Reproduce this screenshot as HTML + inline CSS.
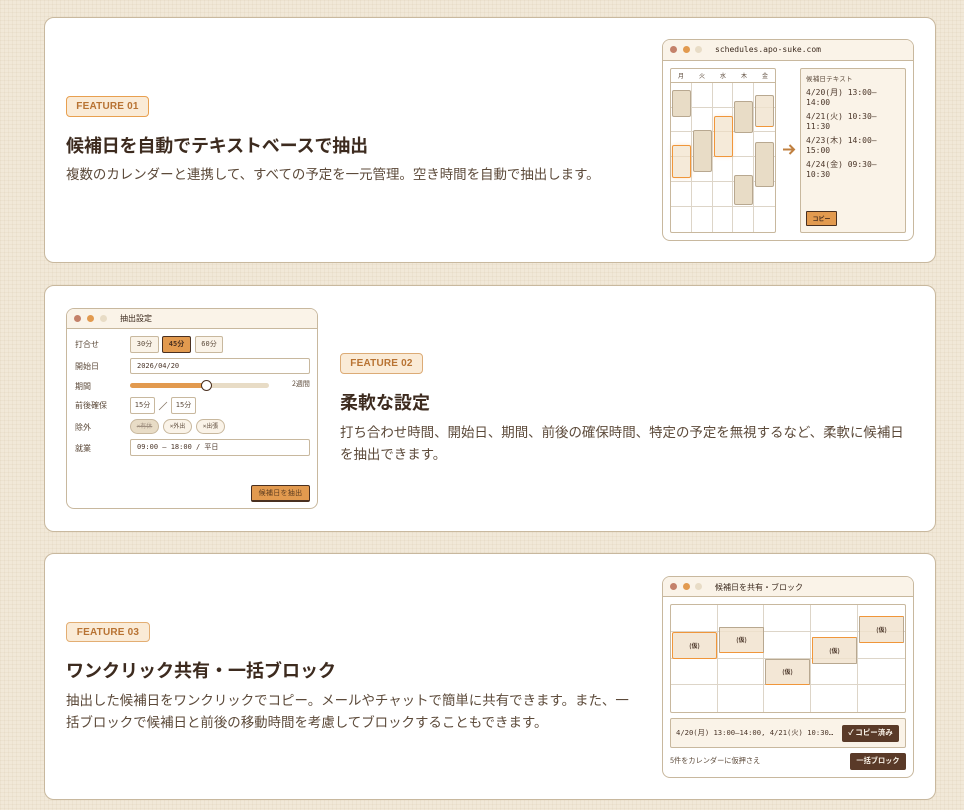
<!DOCTYPE html>
<html lang="ja"><head><meta charset="utf-8"><style>
*{box-sizing:border-box;margin:0;padding:0}
html,body{width:964px;height:810px;overflow:hidden}
body{position:relative;background-color:#f1e8d8;background-image:linear-gradient(rgba(190,165,120,.09) 1px,transparent 1px),linear-gradient(90deg,rgba(190,165,120,.09) 1px,transparent 1px);background-size:4px 4px;font-family:"Liberation Sans","Noto Sans CJK JP",sans-serif;color:#3d2b1f}
.card{position:absolute;left:44px;width:892px;background:#fff;border:1px solid #c8b89e;border-radius:10px}
.badge{position:absolute;height:21px;width:83px;background:#faebd7;border:1px solid #e8a050;border-radius:4px;color:#b87333;font:700 10px/19px "Liberation Sans",sans-serif;letter-spacing:.2px;text-align:center}
h2{position:absolute;font:700 18px/26px "Noto Sans CJK JP",sans-serif;color:#3d2b1f;white-space:nowrap}
p.d{position:absolute;font:400 13.45px/22px "Noto Sans CJK JP",sans-serif;color:#5c4a3a}
.win{position:absolute;width:252px;background:#fff;border:1px solid #c8b89e;border-radius:8px;overflow:hidden}
.bar{position:absolute;left:0;top:0;width:100%;height:21px;background:#faf3e8;border-bottom:1px solid #c8b89e}
.dot{position:absolute;width:7px;height:7px;border-radius:50%;top:6px}
.bt{position:absolute;top:4px;font:400 8px/12px "DejaVu Sans Mono","Noto Sans CJK JP",monospace;color:#3d2b1f;white-space:nowrap}
.t{position:absolute;white-space:nowrap;font:400 7px/10px "Noto Sans CJK JP",sans-serif;color:#5c4a3a}
.m{position:absolute;white-space:nowrap;font:400 7px/10px "DejaVu Sans Mono","Noto Sans CJK JP",monospace;color:#3d2b1f}
.b{position:absolute;background:#faf3e8;border:1px solid #c8b89e;border-radius:2px;text-align:center;font:400 7px/16px "DejaVu Sans Mono","Noto Sans CJK JP",monospace;color:#5c4a3a}
.l{position:absolute;background:#ddd5c8}
.e{position:absolute;background:#e8dcc6;border:1px solid #b8a890;border-radius:2px}
.h{position:absolute;background:rgba(240,222,196,.65);border:1px solid #f0963a;border-radius:2px}
.p{position:absolute;background:rgba(240,226,205,.82);border:1px solid #b8a890;border-bottom:1px solid #f0963a;border-radius:1px;text-align:center;font:700 6px/26px "Noto Sans CJK JP",sans-serif;color:#4a3528}
</style></head><body>

<div class="card" style="top:17px;height:246px"></div>
<div class="card" style="top:285px;height:247px"></div>
<div class="card" style="top:553px;height:247px"></div>

<div class="badge" style="left:66px;top:96px">FEATURE 01</div>
<h2 style="left:66px;top:132px;letter-spacing:-.15px">候補日を自動でテキストベースで抽出</h2>
<p class="d" style="left:66px;top:162px;width:574px">複数のカレンダーと連携して、すべての予定を一元管理。空き時間を自動で抽出します。</p>

<div class="win" style="left:662px;top:39px;height:202px">
  <div class="bar"></div>
  <div class="dot" style="left:7px;background:#c4816a"></div>
  <div class="dot" style="left:20px;background:#e29a4f"></div>
  <div class="dot" style="left:32px;background:#e8dcc6"></div>
  <div class="bt" style="left:52px">schedules.apo-suke.com</div>
</div>
<div style="position:absolute;left:670px;top:68px;width:106px;height:165px;border:1px solid #c8b89e;border-radius:2px;background:#fff"></div>
<div class="l" style="left:671px;top:82px;width:104px;height:1px;background:#c8b89e"></div>
<div class="l" style="left:691px;top:83px;width:1px;height:149px"></div>
<div class="l" style="left:712px;top:83px;width:1px;height:149px"></div>
<div class="l" style="left:732px;top:83px;width:1px;height:149px"></div>
<div class="l" style="left:753px;top:83px;width:1px;height:149px"></div>
<div class="l" style="left:671px;top:107px;width:104px;height:1px"></div>
<div class="l" style="left:671px;top:131px;width:104px;height:1px"></div>
<div class="l" style="left:671px;top:156px;width:104px;height:1px"></div>
<div class="l" style="left:671px;top:181px;width:104px;height:1px"></div>
<div class="l" style="left:671px;top:206px;width:104px;height:1px"></div>
<div class="t" style="left:678px;top:71px;font-size:6px">月</div>
<div class="t" style="left:699px;top:71px;font-size:6px">火</div>
<div class="t" style="left:720px;top:71px;font-size:6px">水</div>
<div class="t" style="left:741px;top:71px;font-size:6px">木</div>
<div class="t" style="left:762px;top:71px;font-size:6px">金</div>
<div class="e" style="left:672px;top:90px;width:19px;height:27px"></div>
<div class="h" style="left:672px;top:145px;width:19px;height:33px;box-shadow:0 0 4px rgba(240,150,58,.3)"></div>
<div class="e" style="left:693px;top:130px;width:19px;height:42px"></div>
<div class="h" style="left:714px;top:116px;width:19px;height:41px;box-shadow:0 0 4px rgba(240,150,58,.2)"></div>
<div class="e" style="left:734px;top:101px;width:19px;height:32px"></div>
<div class="e" style="left:734px;top:175px;width:19px;height:30px"></div>
<div class="e" style="left:755px;top:95px;width:19px;height:32px;background:rgba(240,226,205,.8);border-bottom-color:#f0963a"></div>
<div class="e" style="left:755px;top:142px;width:19px;height:45px"></div>
<svg style="position:absolute;left:781px;top:142px" width="15" height="15" viewBox="0 0 15 15"><path d="M2 7.5H13M8.5 3L13 7.5L8.5 12" fill="none" stroke="#c08040" stroke-width="2"/></svg>
<div style="position:absolute;left:800px;top:68px;width:106px;height:165px;background:#faf3e8;border:1px solid #c8b89e;border-radius:2px"></div>
<div class="t" style="left:806px;top:73px;font-size:6.5px;letter-spacing:.2px">候補日テキスト</div>
<div class="m" style="left:806px;top:88px;font-size:8px;line-height:10px;white-space:normal;width:90px;color:#4a3528">4/20(月) 13:00–<br>14:00</div>
<div class="m" style="left:806px;top:112px;font-size:8px;line-height:10px;white-space:normal;width:90px;color:#4a3528">4/21(火) 10:30–<br>11:30</div>
<div class="m" style="left:806px;top:136px;font-size:8px;line-height:10px;white-space:normal;width:90px;color:#4a3528">4/23(木) 14:00–<br>15:00</div>
<div class="m" style="left:806px;top:160px;font-size:8px;line-height:10px;white-space:normal;width:90px;color:#4a3528">4/24(金) 09:30–<br>10:30</div>
<div style="position:absolute;left:806px;top:211px;width:31px;height:15px;background:#e29a4f;border:1px solid #4a3020;border-radius:1px;text-align:center;font:700 6px/13px 'Noto Sans CJK JP',sans-serif;color:#4a3020">コピー</div>

<div class="badge" style="left:340px;top:353px;border-color:#dcab76">FEATURE 02</div>
<h2 style="left:340px;top:389px">柔軟な設定</h2>
<p class="d" style="left:340px;top:420px;width:574px">打ち合わせ時間、開始日、期間、前後の確保時間、特定の予定を無視するなど、柔軟に候補日を抽出できます。</p>

<div class="win" style="left:66px;top:308px;height:201px">
  <div class="bar" style="height:20px"></div>
  <div class="dot" style="left:7px;top:6px;background:#c4816a"></div>
  <div class="dot" style="left:20px;top:6px;background:#e29a4f"></div>
  <div class="dot" style="left:33px;top:6px;background:#e8dcc6"></div>
  <div class="t" style="left:53px;top:5px;font-size:8px;line-height:10px;color:#3d2b1f">抽出設定</div>
</div>
<div class="t" style="left:75px;top:340px;font-size:8px">打合せ</div>
<div class="t" style="left:75px;top:362px;font-size:8px">開始日</div>
<div class="t" style="left:75px;top:382px;font-size:8px">期間</div>
<div class="t" style="left:75px;top:401px;font-size:8px">前後確保</div>
<div class="t" style="left:75px;top:423px;font-size:8px">除外</div>
<div class="t" style="left:75px;top:444px;font-size:8px">就業</div>
<div class="b" style="left:130px;top:336px;width:29px;height:17px;line-height:15px">30分</div>
<div class="b" style="left:162px;top:336px;width:29px;height:17px;line-height:15px;background:#e29a4f;border-color:#4a3020;color:#4a3020;font-weight:700">45分</div>
<div class="b" style="left:195px;top:336px;width:28px;height:17px;line-height:15px">60分</div>
<div class="b" style="left:130px;top:358px;width:180px;height:16px;background:#fff;text-align:left;padding-left:6px;line-height:14px;color:#4a3528">2026/04/20</div>
<div style="position:absolute;left:130px;top:383px;width:139px;height:5px;background:#e8dcc6;border-radius:3px"></div>
<div style="position:absolute;left:130px;top:383px;width:76px;height:5px;background:#e29a4f;border-radius:3px 0 0 3px"></div>
<div style="position:absolute;left:201px;top:380px;width:11px;height:11px;background:#fff;border:1px solid #4a3020;border-radius:50%"></div>
<div class="t" style="left:292px;top:379px;font-size:7px">2週間</div>
<div class="b" style="left:130px;top:397px;width:25px;height:17px;background:#fff;line-height:14px">15分</div>
<svg style="position:absolute;left:158px;top:399px" width="10" height="12"><path d="M1 11L9 3" stroke="#8a7a68" stroke-width=".8"/></svg>
<div class="b" style="left:171px;top:397px;width:25px;height:17px;background:#fff;line-height:14px">15分</div>
<div class="b" style="left:130px;top:419px;width:29px;height:15px;border-radius:8px;background:#e8dcc6;font-size:6px;line-height:14px;color:#a09080;text-decoration:line-through">×有休</div>
<div class="b" style="left:163px;top:419px;width:29px;height:15px;border-radius:8px;font-size:6px;line-height:14px">×外出</div>
<div class="b" style="left:196px;top:419px;width:29px;height:15px;border-radius:8px;font-size:6px;line-height:14px">×出張</div>
<div class="b" style="left:130px;top:439px;width:180px;height:17px;background:#fff;text-align:left;padding-left:6px;line-height:14px;color:#4a3528">09:00 – 18:00 / 平日</div>
<div style="position:absolute;left:251px;top:485px;width:59px;height:17px;background:#e29a4f;border:1px solid #4a3020;border-bottom-width:2px;border-radius:2px;text-align:center;font:400 7px/14px 'Noto Sans CJK JP',sans-serif;letter-spacing:.3px;color:#5c3c20">候補日を抽出</div>

<div class="badge" style="left:66px;top:622px;height:20px;line-height:19px;border-color:#e3ae73;width:84px">FEATURE 03</div>
<h2 style="left:66px;top:657px">ワンクリック共有・一括ブロック</h2>
<p class="d" style="left:66px;top:688px;width:574px">抽出した候補日をワンクリックでコピー。メールやチャットで簡単に共有できます。また、一括ブロックで候補日と前後の移動時間を考慮してブロックすることもできます。</p>

<div class="win" style="left:662px;top:576px;height:202px">
  <div class="bar" style="height:20px"></div>
  <div class="dot" style="left:7px;top:6px;background:#c4816a"></div>
  <div class="dot" style="left:20px;top:6px;background:#e29a4f"></div>
  <div class="dot" style="left:32px;top:6px;background:#e8dcc6"></div>
  <div class="t" style="left:52px;top:5px;font-size:8px;line-height:12px;color:#3d2b1f">候補日を共有・ブロック</div>
</div>
<div style="position:absolute;left:670px;top:604px;width:236px;height:109px;background:#fff;border:1px solid #c8b89e;border-radius:2px"></div>
<div class="l" style="left:717px;top:605px;width:1px;height:107px"></div>
<div class="l" style="left:763px;top:605px;width:1px;height:107px"></div>
<div class="l" style="left:810px;top:605px;width:1px;height:107px"></div>
<div class="l" style="left:857px;top:605px;width:1px;height:107px"></div>
<div class="l" style="left:671px;top:631px;width:234px;height:1px"></div>
<div class="l" style="left:671px;top:658px;width:234px;height:1px"></div>
<div class="l" style="left:671px;top:684px;width:234px;height:1px"></div>
<div class="p" style="left:672px;top:632px;width:45px;height:27px;border-color:#f0963a;border-radius:2px">(仮)</div>
<div class="p" style="left:719px;top:627px;width:45px;height:26px;line-height:24px">(仮)</div>
<div class="p" style="left:765px;top:659px;width:45px;height:26px;line-height:24px">(仮)</div>
<div class="p" style="left:812px;top:637px;width:45px;height:27px;border-bottom-color:#b8a890;border-top-color:#f0963a;border-left-color:#f0963a">(仮)</div>
<div class="p" style="left:859px;top:616px;width:45px;height:27px;border-top-color:#f0963a;line-height:25px">(仮)</div>
<div style="position:absolute;left:670px;top:718px;width:236px;height:30px;background:#faf3e8;border:1px solid #c8b89e;border-radius:2px"></div>
<div class="m" style="left:676px;top:728px;color:#4a3528;font-size:7.2px">4/20(月) 13:00–14:00, 4/21(火) 10:30…</div>
<div style="position:absolute;left:842px;top:725px;width:57px;height:17px;background:#5a3a28;border-radius:2px;text-align:center;color:#faf3e8;font:700 7.5px/15px 'Noto Sans CJK JP',sans-serif">✓ コピー済み</div>
<div class="t" style="left:670px;top:756px;font-size:7.2px">5件をカレンダーに仮押さえ</div>
<div style="position:absolute;left:850px;top:753px;width:56px;height:17px;background:#5a3a28;border-radius:2px;text-align:center;color:#faf3e8;font:700 7.2px/16px 'Noto Sans CJK JP',sans-serif">一括ブロック</div>

</body></html>
